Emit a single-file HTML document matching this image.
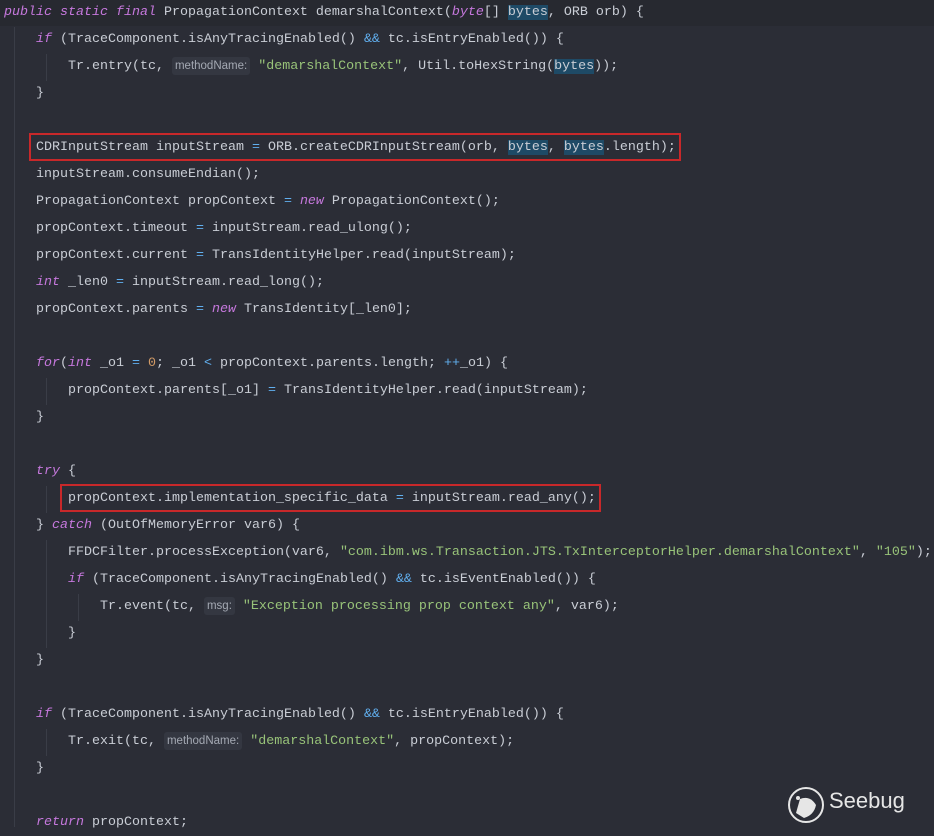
<!DOCTYPE html>
<html><head><meta charset="utf-8"><style>
body{margin:0;width:934px;height:833px;background:#2b2d36;overflow:hidden;position:relative;font-family:"Liberation Mono",monospace;font-size:13.33px;color:#c9cdd5}
.l{position:absolute;left:4px;height:27px;line-height:27px;white-space:pre}
.k{color:#c678dd;font-style:italic}
.s{color:#98c379}
.n{color:#d19a66}
.o{color:#61afef}
.h{background:#1e4a66}
.hint{font-family:"Liberation Sans",sans-serif;font-size:11.5px;color:#a4a9b3;background:#343741;padding:3px 3px;border-radius:3px}
.box{position:absolute;border:2px solid #c8282a;box-sizing:border-box}
.g{position:absolute;width:1px;background:#3a3d47}
</style></head><body>
<div style="position:absolute;left:0;top:0;width:934px;height:26px;background:#272930"></div>
<div class="g" style="left:14px;top:27px;height:800px"></div>
<div class="g" style="left:46px;top:54px;height:27px"></div>
<div class="g" style="left:46px;top:378px;height:27px"></div>
<div class="g" style="left:46px;top:486px;height:27px"></div>
<div class="g" style="left:46px;top:540px;height:108px"></div>
<div class="g" style="left:78px;top:594px;height:27px"></div>
<div class="g" style="left:46px;top:729px;height:27px"></div>
<div class="l" style="top:-1px"><span class="k">public static final</span> PropagationContext demarshalContext(<span class="k">byte</span>[] <span class="h">bytes</span>, ORB orb) {</div>
<div class="l" style="top:26px">    <span class="k">if</span> (TraceComponent.isAnyTracingEnabled() <span class="o">&amp;&amp;</span> tc.isEntryEnabled()) {</div>
<div class="l" style="top:53px">        Tr.entry(tc, <span class="hint">methodName:</span> <span class="s">"demarshalContext"</span>, Util.toHexString(<span class="h">bytes</span>));</div>
<div class="l" style="top:80px">    }</div>
<div class="l" style="top:134px">    CDRInputStream inputStream <span class="o">=</span> ORB.createCDRInputStream(orb, <span class="h">bytes</span>, <span class="h">bytes</span>.length);</div>
<div class="l" style="top:161px">    inputStream.consumeEndian();</div>
<div class="l" style="top:188px">    PropagationContext propContext <span class="o">=</span> <span class="k">new</span> PropagationContext();</div>
<div class="l" style="top:215px">    propContext.timeout <span class="o">=</span> inputStream.read_ulong();</div>
<div class="l" style="top:242px">    propContext.current <span class="o">=</span> TransIdentityHelper.read(inputStream);</div>
<div class="l" style="top:269px">    <span class="k">int</span> _len0 <span class="o">=</span> inputStream.read_long();</div>
<div class="l" style="top:296px">    propContext.parents <span class="o">=</span> <span class="k">new</span> TransIdentity[_len0];</div>
<div class="l" style="top:350px">    <span class="k">for</span>(<span class="k">int</span> _o1 <span class="o">=</span> <span class="n">0</span>; _o1 <span class="o">&lt;</span> propContext.parents.length; <span class="o">++</span>_o1) {</div>
<div class="l" style="top:377px">        propContext.parents[_o1] <span class="o">=</span> TransIdentityHelper.read(inputStream);</div>
<div class="l" style="top:404px">    }</div>
<div class="l" style="top:458px">    <span class="k">try</span> {</div>
<div class="l" style="top:485px">        propContext.implementation_specific_data <span class="o">=</span> inputStream.read_any();</div>
<div class="l" style="top:512px">    } <span class="k">catch</span> (OutOfMemoryError var6) {</div>
<div class="l" style="top:539px">        FFDCFilter.processException(var6, <span class="s">"com.ibm.ws.Transaction.JTS.TxInterceptorHelper.demarshalContext"</span>, <span class="s">"105"</span>);</div>
<div class="l" style="top:566px">        <span class="k">if</span> (TraceComponent.isAnyTracingEnabled() <span class="o">&amp;&amp;</span> tc.isEventEnabled()) {</div>
<div class="l" style="top:593px">            Tr.event(tc, <span class="hint">msg:</span> <span class="s">"Exception processing prop context any"</span>, var6);</div>
<div class="l" style="top:620px">        }</div>
<div class="l" style="top:647px">    }</div>
<div class="l" style="top:701px">    <span class="k">if</span> (TraceComponent.isAnyTracingEnabled() <span class="o">&amp;&amp;</span> tc.isEntryEnabled()) {</div>
<div class="l" style="top:728px">        Tr.exit(tc, <span class="hint">methodName:</span> <span class="s">"demarshalContext"</span>, propContext);</div>
<div class="l" style="top:755px">    }</div>
<div class="l" style="top:809px">    <span class="k">return</span> propContext;</div>
<div class="box" style="left:29px;top:133px;width:652px;height:28px"></div>
<div class="box" style="left:60px;top:484px;width:541px;height:28px"></div>
<svg style="position:absolute;left:786px;top:785px" width="40" height="40" viewBox="0 0 40 40">
<circle cx="20" cy="20" r="17" fill="none" stroke="#e6e6e6" stroke-width="2"/>
<path d="M10 28 L14 14 Q24 10 30 20 Q28 30 18 33 Z" fill="#e6e6e6"/>
<circle cx="12" cy="13" r="2" fill="#e6e6e6"/>
</svg>
<div style="position:absolute;left:829px;top:788px;font-family:'Liberation Sans',sans-serif;font-size:22px;color:#e6e6e6">Seebug</div>
</body></html>
